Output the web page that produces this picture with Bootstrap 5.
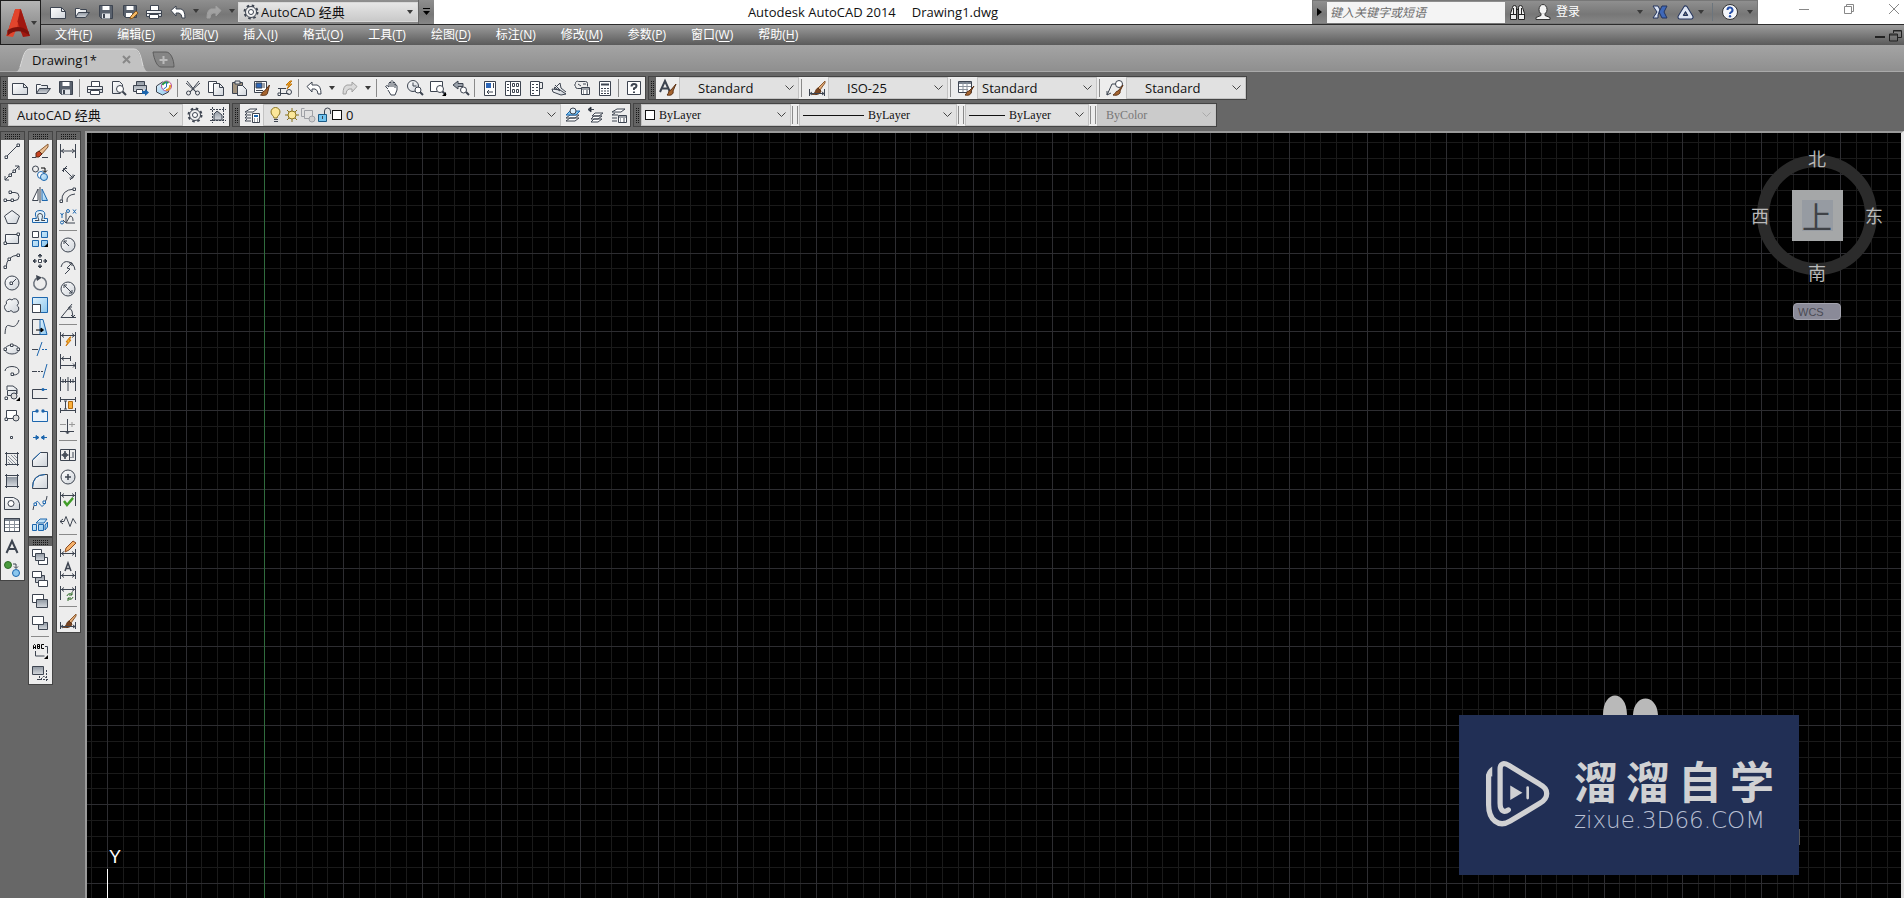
<!DOCTYPE html>
<html lang="zh-CN">
<head>
<meta charset="utf-8">
<meta name="viewport" content="width=device-width, initial-scale=1">
<title>Autodesk AutoCAD 2014 - Drawing1.dwg</title>
<link href="https://cdn.jsdelivr.net/npm/bootstrap@5.3.0/dist/css/bootstrap.min.css" rel="stylesheet">
<style>
  :root { --ink:#3d4450; --blue:#1d66ad; --strip:#ededed; --desk:#676767; }
  body { font-family:"Open Sans","Noto Sans CJK SC",sans-serif; font-size:12px; line-height:16px; color:#111; background:var(--desk); }
  button { border:0; background:none; padding:0; color:inherit; }
  svg { display:block; flex:none; }
  .ico { width:16px; height:16px; fill:none; stroke:var(--ink); stroke-width:1; overflow:visible; }
  .caret { width:0; height:0; border:3px solid transparent; border-top:4px solid #3a3a3a; border-bottom:0; }

  /* header */
  .app-btn { width:41px; border:1px solid #1d1d1d; background:linear-gradient(#b4b4b4,#777); }
  .title-row { height:24px; background:#fff; }
  .qat, .info-bar { background:linear-gradient(#8f8f8f,#777 60%,#868686); }
  .qat { width:393px; padding-left:5px; }
  .qat .tool { width:24px; height:23px; }
  .qat .drop { width:12px; height:22px; }
  .strip .drop { width:13px; height:22px; }
  .workspace-box { width:180px; height:20px; margin-top:2px; background:linear-gradient(#e6e6e6,#c9c9c9); border:1px solid #d8d8d8; }
  .workspace-box select { width:100%; font-size:13px; background:transparent; border:0; appearance:none; line-height:18px; padding:0 2px; color:#111; }
  .qat-more { width:16px; border-left:1px solid #666; }
  .win-title { font-size:13px; color:#111; }
  .info-bar { width:446px; border:1px solid #777; }
  .info-bar input { width:178px; border:0; background:#f4f4f4; font-size:12px; font-style:italic; padding:0 3px; color:#333; height:21px; }
  .info-bar input::placeholder { color:#6c6c6c; }
  .win-btns { width:146px; padding:0 4px 6px 40px; }

  .menu-row { height:21px; border-top:1px solid #2c2c2c; background:linear-gradient(#9c9c9c,#5a5a5a); padding:0 2px 0 14px; }
  .menu-row a { color:#fff; text-decoration:none; line-height:20px; margin-right:25px; }
  .menu-row u { text-underline-offset:2px; }
  .tab-row { height:27px; background:linear-gradient(#a4a4a4,#8f8f8f); border-bottom:1px solid #a9a9a9; padding-left:16px; }
  .doc-tab { width:132px; height:24px; margin-top:3px; font-size:13px; }
  .doc-tab > svg { inset:0; }
  .new-tab { width:24px; height:18px; margin:5px 0 0 4px; }

  /* toolbars */
  .strip { background:var(--strip); border:1px solid #444; height:24px; }
  .strip .tool { width:23px; height:22px; }
  .strip .rule { width:1px; height:18px; margin:0 3px 0 2px; background:#8a8a8a; }
  .grip { width:7px; align-self:stretch; border:solid #646464; border-width:3px 2px 3px 1px; background:linear-gradient(90deg,#646464 1px,transparent 1px) 0 0/2px 2px, linear-gradient(#646464 1px,#161616 1px) 0 0/2px 2px; }
  .combo { height:22px; border:1px solid #c3c3c3; background:#e1e1e1 no-repeat right 4px center/9px 6px url("data:image/svg+xml,%3Csvg xmlns='http://www.w3.org/2000/svg' viewBox='0 0 9 6'%3E%3Cpath d='M.5 .5l4 4 4-4' fill='none' stroke='%23444'/%3E%3C/svg%3E"); appearance:none; border-radius:0; font-size:13px; line-height:18px; color:#111; padding:0 18px; outline-offset:-1px; }
  .combo:disabled { background-color:#cbcbcb; color:#777; opacity:1; background-image:url("data:image/svg+xml,%3Csvg xmlns='http://www.w3.org/2000/svg' viewBox='0 0 9 6'%3E%3Cpath d='M.5 .5l4 4 4-4' fill='none' stroke='%23aaa'/%3E%3C/svg%3E"); }
  .combo-plain { background:transparent; border:0; appearance:none; padding:0; min-width:0; color:#111; line-height:18px; }
  .combo.near { padding-left:4px; }
  .serif-combo, .serif-combo select { font-family:"Liberation Serif",serif; font-size:12px; }
  .serif-combo.d-flex.combo { padding-left:3px; }
  .w-style { width:120px; }
  .rule-pair { width:6px; border:solid #8a8a8a; border-width:0 1px; height:18px; margin:0 1px; flex:none; }
  .swatch { width:10px; height:10px; border:1px solid #111; background:#fff; flex:none; }
  .lineweight { height:1px; background:#111; flex:none; }

  .side { gap:3px; }
  .strip-v { width:25px; height:auto; }
  .strip-v .tool { width:22px; height:22px; }
  .strip-v .rule { width:18px; height:1px; margin:2px 2px 3px; }
  .strip-v .grip { width:auto; height:8px; border-width:1px 3px; }

  /* drawing area */
  .model { border:solid #9a9a9a; border-width:2px 3px 0 2px; border-right-color:#e4e4e4; margin-left:4px; background:#000; min-height:300px; }
  .model > svg.sheet { inset:0; width:100%; height:100%; }
  .ucs { left:20px; bottom:0; color:#fff; font:18px/18px "Liberation Sans",sans-serif; height:50px; }
  .ucs::before { content:""; position:absolute; left:0; bottom:0; width:1px; height:29px; background:#fff; }
  .ucs span { padding-left:2px; }
  .compass { right:18px; top:15px; width:132px; height:172px; color:#b9b9b9; font-size:18px; line-height:20px; font-family:"Noto Sans CJK SC",sans-serif; }
  .compass-ring { width:120px; height:120px; margin:7px auto 0; border:12px solid #2b2b2b; border-radius:50%; }
  .compass-mark { position:absolute; }
  .mark-n { left:57px; top:0; } .mark-w { left:0; top:57px; } .mark-e { right:0; top:57px; } .mark-s { left:57px; top:114px; }
  .cube { width:51px; height:51px; background:#a5a7a8; color:#3f4247; font-size:30px; box-shadow:inset 0 0 0 10px #a5a7a8, inset 0 0 0 51px #969ba2; }
  .wcs { width:48px; height:17px; background:#8a8a98; border:1px solid #a3a3ae; border-radius:4px; color:#4a4a54; font:11px/14px "Liberation Sans",sans-serif; padding:0 4px; text-align:left; left:42px; top:155px; }
  .brand-card { right:102px; bottom:23px; width:340px; height:160px; background:#212f55; color:#d0d1d3; padding:0 26px 3px; }
  .brand-card .ears { position:absolute; left:143px; top:-20px; }
  .brand-card::after { content:""; position:absolute; left:100%; bottom:30px; width:1px; height:16px; background:#555; }
  .brand-name { font:700 44px/52px "Noto Sans CJK SC",sans-serif; gap:8px; }
  .brand-site { font:200 23px/28px "DejaVu Sans",sans-serif; color:#b9c0d4; }
</style>
</head>
<body class="d-flex flex-column min-vh-100 overflow-hidden">
<svg width="0" height="0" class="position-absolute" aria-hidden="true">
  <defs>
    <linearGradient id="paper" x2="1" y2="1"><stop stop-color="#fff"/><stop offset="1" stop-color="#cfd4da"/></linearGradient>
    <linearGradient id="steel" x2="0" y2="1"><stop stop-color="#8e96a0"/><stop offset="1" stop-color="#d5d9de"/></linearGradient>
    <linearGradient id="sky" x2="1" y2="1"><stop stop-color="#e4f3fc"/><stop offset="1" stop-color="#8cc7ee"/></linearGradient>
  </defs>
</svg>

<header>
  <div class="d-flex">
    <button class="app-btn d-flex align-items-center" aria-label="应用程序菜单">
      <svg class="ms-1" width="26" height="29" viewBox="3 2 23 26">
        <path d="M4 27L12 3h5l8 24h-6l-3-6-4 1-2 5z" fill="#c42a17"/>
        <path d="M12 3L4 27l6 1 4-9 2-16z" fill="#e2452c"/>
        <path d="M17 3l8 24-6 1-5-14z" fill="#a01810"/>
        <path d="M5 22c7-4 13-4 19 1l1 4c-5-5-14-6-20 0z" fill="#7d120c"/>
      </svg>
      <span class="caret"></span>
    </button>
    <div class="flex-grow-1">
      <div class="title-row d-flex">
        <div class="qat d-flex" data-tools="new open save saveas print undo ▾ redo ▾">
          <div class="workspace-box d-flex align-items-center order-1">
            <svg class="ico ms-1" viewBox="0 0 16 16"><use href="#i-gear"/></svg>
            <select aria-label="工作空间"><option>AutoCAD 经典</option></select>
            <span class="caret me-1"></span>
          </div>
          <button class="qat-more order-1" aria-label="自定义快速访问工具栏"><svg width="15" height="12" viewBox="0 0 15 12"><path d="M4 2h7v1H4zM4 5h7L7.500 9z"/></svg></button>
        </div>
        <div class="win-title flex-grow-1 d-flex justify-content-center align-items-center gap-3"><span>Autodesk AutoCAD 2014</span><span>Drawing1.dwg</span></div>
        <div class="info-bar d-flex align-items-center">
          <button class="d-flex justify-content-center px-1" aria-label="展开"><svg width="6" height="8" viewBox="0 0 6 8"><path d="M0 0l5 4-5 4z"/></svg></button>
          <input type="text" placeholder="键入关键字或短语" aria-label="键入关键字或短语">
          <button class="ms-1" aria-label="搜索"><svg width="17" height="18" viewBox="0 0 17 18" fill="#ededed" stroke="#222"><path d="M3.500 4.500q0-2 2-2t2 2v12h-6v-6zM9.500 4.500q0-2 2-2t2 2l2 6v6h-6z"/><path d="M2 11.500h5M10 11.500h5M7 6.500h3M4.500 5v6M12.500 5v6"/></svg></button>
          <button class="d-flex align-items-center ms-2 text-white"><svg width="18" height="18" viewBox="0 0 18 18" fill="#f3f3f3" stroke="#333"><ellipse cx="9" cy="6.500" rx="4" ry="5"/><path d="M7 11v1.500l-5 2v2h14v-2l-5-2V11"/></svg><span class="ms-1">登录</span></button>
          <span class="caret ms-auto me-2"></span>
          <button aria-label="Autodesk Exchange"><svg width="18" height="18" viewBox="0 0 18 18" stroke="#24355f"><path d="M2 3h5l2 4-2 5v3H2l4-6z" fill="#dbe3f2"/><path d="M16 3h-5L8 9l3 6h5l-3-6z" fill="#3f68b8"/></svg></button>
          <button class="ms-2" aria-label="Autodesk 360"><svg width="17" height="17" viewBox="0 0 17 17" fill="none" stroke="#24355f"><path d="M8.500 4L14 13H3z" stroke-width="5" stroke-linejoin="round"/><path d="M8.500 4L14 13H3z" stroke="#dfe6f3" stroke-width="3" stroke-linejoin="round"/><path d="M8.500 8l2 3.500h-4z" fill="#777"/></svg></button>
          <span class="caret ms-1"></span>
          <button class="mx-2 ps-2 border-start border-secondary" aria-label="帮助"><svg width="18" height="18" viewBox="0 0 18 18"><circle cx="9" cy="9" r="7.500" fill="#f4f6fa" stroke="#333"/><path d="M6.500 7a2.500 2.500 0 1 1 3.500 2.300Q9 9.800 9 11" fill="none" stroke="#2850a8" stroke-width="2"/><circle cx="9" cy="13.200" r="1.200" fill="#2850a8"/></svg></button>
          <span class="caret me-1"></span>
        </div>
        <div class="win-btns d-flex justify-content-between align-items-center">
          <button aria-label="最小化"><svg width="12" height="12" viewBox="0 0 12 12" stroke="#888"><path d="M1 6.500h10"/></svg></button>
          <button aria-label="还原"><svg width="12" height="12" viewBox="0 0 12 12" stroke="#888" fill="none"><path d="M1.500 3.500h7v7h-7zM3.500 3V1.500h7v7H9"/></svg></button>
          <button aria-label="关闭"><svg width="12" height="12" viewBox="0 0 12 12" stroke="#888"><path d="M1 1l10 10M11 1L1 11"/></svg></button>
        </div>
      </div>
      <nav class="menu-row d-flex" aria-label="主菜单">
        <a href="#">文件(<u>F</u>)</a><a href="#">编辑(<u>E</u>)</a><a href="#">视图(<u>V</u>)</a><a href="#">插入(<u>I</u>)</a><a href="#">格式(<u>O</u>)</a><a href="#">工具(<u>T</u>)</a><a href="#">绘图(<u>D</u>)</a><a href="#">标注(<u>N</u>)</a><a href="#">修改(<u>M</u>)</a><a href="#">参数(<u>P</u>)</a><a href="#">窗口(<u>W</u>)</a><a href="#">帮助(<u>H</u>)</a>
        <button class="ms-auto me-1" aria-label="最小化图形"><svg width="10" height="12" viewBox="0 0 10 12"><path d="M0 7h10v2H0z" fill="#222"/></svg></button>
        <button aria-label="还原图形"><svg width="13" height="13" viewBox="0 0 13 13" fill="none" stroke="#222"><path d="M4.500 4V1.500h8v7H9"/><path d="M.5 5h8v7h-8zM.5 6h8M4 2h8"/></svg></button>
      </nav>
    </div>
  </div>
  <div class="tab-row d-flex">
    <div class="doc-tab position-relative">
      <svg class="position-absolute" width="132" height="24" viewBox="0 0 132 24"><path d="M0 24C6 22 6 1 14 1h104c7 0 8 21 14 23z" fill="#c2c2c2"/><path d="M4 19C7 10 8 1 14 1h104c6 0 7 9 9 17" fill="none" stroke="#dadada"/></svg>
      <div class="position-relative d-flex align-items-center h-100 ps-3 pe-3"><span>Drawing1*</span>
        <button class="ms-auto" aria-label="关闭选项卡"><svg width="10" height="10" viewBox="0 0 10 10" stroke="#888" stroke-width="2"><path d="M1 1l7 7M8 1L1 8"/></svg></button></div>
    </div>
    <button class="new-tab" aria-label="新建选项卡"><svg width="24" height="17" viewBox="0 0 24 17"><path d="M1 1h13c5 0 8 8 8 15H9C5 16 2 8 1 1z" fill="#858585" stroke="#5c5c5c"/><path d="M11.500 5v8M7.500 9h8" stroke="#bbb" stroke-width="2"/></svg></button>
  </div>
</header>

<div class="d-flex flex-wrap mt-1" style="column-gap:2px">
  <div class="strip d-flex align-items-center" role="toolbar" aria-label="标准" data-tools="# new open save | print preview publish web | cut copy paste match block | undo ▾ redo ▾ | pan zoomrt zoomwin zoomprev | props center palettes sheet markup calc | help"></div>
  <div class="strip d-flex align-items-center" role="toolbar" aria-label="样式">
    <span class="grip"></span><span data-tools="textstyle" class="d-flex"></span>
    <select class="combo w-style" aria-label="文字样式"><option>Standard</option></select><span class="rule"></span>
    <span data-tools="dimstyle" class="d-flex"></span>
    <select class="combo w-style" aria-label="标注样式"><option>ISO-25</option></select><span class="rule"></span>
    <span data-tools="tablestyle" class="d-flex"></span>
    <select class="combo near w-style" aria-label="表格样式"><option>Standard</option></select><span class="rule"></span>
    <span data-tools="leaderstyle" class="d-flex"></span>
    <select class="combo w-style" aria-label="多重引线样式"><option>Standard</option></select>
  </div>
</div>
<div class="d-flex flex-wrap mb-1" style="margin-top:3px;column-gap:2px">
  <div class="strip d-flex align-items-center" role="toolbar" aria-label="工作空间">
    <span class="grip"></span>
    <select class="combo" style="width:175px;padding-left:8px" aria-label="工作空间"><option>AutoCAD 经典</option></select>
    <span data-tools="gear wsave" class="d-flex"></span>
  </div>
  <div class="strip d-flex align-items-center" role="toolbar" aria-label="图层">
    <span class="grip"></span><span data-tools="layers" class="d-flex"></span>
    <div class="combo d-flex align-items-center px-1" style="width:298px">
      <svg class="ico" viewBox="0 0 16 16"><path d="M5 11c0-2-3-3-3-6a4.500 4.500 0 0 1 9 0c0 3-3 4-3 6z" transform="translate(1 0)" fill="#fbe79a" stroke="#8a7420"/><path d="M6 12.500h4M6 14.500h4"/></svg>
      <svg class="ico" viewBox="0 0 16 16"><path d="M8 1v14M1 8h14M3 3l10 10M13 3L3 13" stroke="#8a7420"/><circle cx="8" cy="8" r="4" fill="#fbe79a" stroke="#8a7420"/></svg>
      <svg class="ico" viewBox="0 0 16 16" opacity=".4"><path d="M4.500 1.500h-3v8h3M4.500 3.500h8v8h-8z"/><circle cx="12" cy="12" r="3" fill="#bbb"/></svg>
      <svg class="ico" viewBox="0 0 16 16"><path d="M2.500 7.500h8v7h-8z" fill="#74c4ee" stroke="#1a5a85"/><path d="M8.500 7V4a3 3 0 0 1 6 0v3M6.500 9v3"/></svg>
      <span class="swatch ms-0 me-1"></span>
      <select class="combo-plain flex-grow-1" aria-label="当前图层"><option>0</option></select>
    </div>
    <span data-tools="laycur layprev laystate" class="d-flex"></span>
  </div>
  <div class="strip d-flex align-items-center serif-combo" role="toolbar" aria-label="特性">
    <span class="grip"></span>
    <div class="combo d-flex align-items-center gap-1 serif-combo" style="width:150px"><span class="swatch"></span><select class="combo-plain flex-grow-1" aria-label="颜色"><option>ByLayer</option></select></div>
    <span class="rule-pair"></span>
    <div class="combo d-flex align-items-center gap-1 serif-combo" style="width:158px"><span class="lineweight" style="width:61px"></span><select class="combo-plain flex-grow-1" aria-label="线型"><option>ByLayer</option></select></div>
    <span class="rule-pair"></span>
    <div class="combo d-flex align-items-center gap-1 serif-combo" style="width:124px"><span class="lineweight" style="width:36px"></span><select class="combo-plain flex-grow-1" aria-label="线宽"><option>ByLayer</option></select></div>
    <span class="rule-pair"></span>
    <select class="combo serif-combo" style="width:119px;padding-left:8px" disabled aria-label="打印样式"><option>ByColor</option></select>
  </div>
</div>

<main class="d-flex flex-grow-1">
  <div class="side d-flex align-items-start">
    <div class="strip strip-v d-flex flex-column" role="toolbar" aria-label="绘图" data-tools="# line xline pline polygon rect arc circle cloud spline ellipse earc insert mkblock point hatch gradient region table text addsel"></div>
    <div>
      <div class="strip strip-v d-flex flex-column" role="toolbar" aria-label="修改" data-tools="# erase copyobj mirror offset array move rotate scale stretch trim extend breakpt break join chamfer fillet blend explode"></div>
      <div class="strip strip-v d-flex flex-column" role="toolbar" aria-label="绘图次序" data-tools="# front back above under | textfront hatchback"></div>
    </div>
    <div class="strip strip-v d-flex flex-column" role="toolbar" aria-label="标注" data-tools="# dlinear daligned darc dord | dradius djog ddia dangle | dquick dbase dcont dspace dbreak | tol dcenter dinspect djogline | dedit dtedit dupdate | dimstyle"></div>
  </div>

  <section class="model flex-grow-1 position-relative overflow-hidden" aria-label="模型空间">
    <svg class="sheet position-absolute" aria-hidden="true"><path class="minor" stroke="#1a1a1a"/><path class="major" stroke="#2d2d31"/><path class="axis" stroke="#2f6b3d"/></svg>
    <div class="ucs position-absolute"><span>Y</span></div>
    <div class="compass position-absolute">
      <div class="compass-ring d-flex align-items-center justify-content-center"><div class="cube d-flex align-items-center justify-content-center">上</div></div>
      <span class="compass-mark mark-n">北</span><span class="compass-mark mark-w">西</span><span class="compass-mark mark-e">东</span><span class="compass-mark mark-s">南</span>
      <button class="wcs position-absolute">WCS</button>
    </div>
    <div class="brand-card position-absolute d-flex align-items-center">
      <svg class="ears" width="56" height="20" viewBox="0 0 56 20" fill="#b9b9b9"><path d="M1 20C1-6 25-6 25 20zM31 20c1-22 24-22 25 0z"/></svg>
      <svg width="65" height="67" viewBox="132 242 198 204" fill="none" stroke="#d0d1d3" stroke-width="16" stroke-linecap="round" stroke-linejoin="round"><path d="M143 290v88c0 45 30 72 66 50l90-54c28-17 28-44 0-58l-95-58c-16-9-26-5-26 12v104c0 26 14 28 25 20"/><path d="M135 290q2-16 19-28v30z" fill="#d0d1d3" stroke="none"/><path d="M209 320l37 22-37 22z" fill="#d0d1d3" stroke="none"/><path d="M262 326v32" stroke-width="8"/></svg>
      <div class="ms-4">
        <div class="brand-name d-flex"><span>溜</span><span>溜</span><span>自</span><span>学</span></div>
        <div class="brand-site">zixue.3D66.COM</div>
      </div>
    </div>
  </section>
</main>

<script src="https://cdn.jsdelivr.net/npm/bootstrap@5.3.0/dist/js/bootstrap.bundle.min.js"></script>
<script>
// Shared fragments
const lens = '<circle cx="10" cy="9" r="3.500" fill="#fff"/><path d="M12.500 11.500L16 15" stroke-width="2"/>';
const brush = '<path d="M16 1L9 8l2 2 5-7z" fill="#e0aa78" stroke="#8a5a30"/><path d="M3 14c4 0 3-5 6-6l3 3c-1 4-6 4-9 3z" fill="#7a4520" stroke="#5d3316"/>';
const dim = '<path d="M.5 1v14M15.500 1v14M1 8h14M4 6L1.500 8 4 10M12 6l2.500 2-2.500 2"/>';
const lowDim = '<path d="M.5 8v8M15.500 8v8M1 12.500h14M4 10.500l-2.500 2 2.500 2M12 10.500l2.500 2-2.500 2"/>';
const topDim = '<path d="M.5 1v14M15.500 1v14M1 4.500h14M4 2.500l-2.500 2 2.500 2M12 2.500l2.500 2-2.500 2"/>';
const node = (x, y, c = '#3d4450') => `<path d="M${x - 1} ${y - 1}h2.500v2.500h-2.500z" fill="#fff" stroke="${c}"/>`;
const corner = '<path d="M16 12v4h-4z" fill="#000" stroke="none"/>';

// name: [label, drawing on a 16 x 16 field]
const icons = {
  new:['新建','<path d="M.5 3.500h11l4 4v7H.5z" fill="url(#paper)"/><path d="M11.500 3.500v4h4"/>'],
  open:['打开','<path d="M1.500 13.500v-9h4l1 1h6v3" fill="url(#paper)"/><path d="M1.500 13.500l3-5h11l-4 5z" fill="url(#steel)"/>'],
  save:['保存','<path d="M1.500 1.500h13v13h-11l-2-2z" fill="#59616d"/><path d="M4.500 2h7v4h-7z" fill="#fff" stroke="none"/><path d="M4 9.500h8v5H4z" fill="#e5e8ec" stroke="none"/><path d="M6 10v4" stroke-width="2"/>'],
  saveas:['另存为','<path d="M1.500 1.500h13v12h-11l-2-2z" fill="#59616d"/><path d="M4.500 2h7v4h-7zM4 9h6v4H4z" fill="#fff" stroke="none"/><path d="M8 15l1-3 5-5 2 2-5 5z" fill="#f2b866" stroke="#8a5a20"/>'],
  print:['打印','<path d="M4.500 6V1.500h8V6" fill="#fff"/><path d="M.5 6.500h15v6H.5z" fill="url(#paper)"/><path d="M1 9.500h14"/><path d="M3.500 10.500h9v4h-9z" fill="#fff"/>'],
  preview:['打印预览','<path d="M10.500 13.500h-8v-12h7l3 3v3" fill="url(#paper)"/>'+lens],
  publish:['发布','<path d="M3.500 5V1.500h8V5M.5 5.500h13v6H.5z" fill="url(#steel)"/><path d="M3.500 9.500h6v4h-6z" fill="#fff"/><path d="M9 11h3V9l4 3.500-4 3.500v-2H9z" fill="#1d66ad" stroke="none"/>'],
  web:['三维打印','<path d="M.5 6l6-4 6 3v7l-6 3-6-3z" fill="url(#sky)"/><circle cx="10.500" cy="6" r="5" fill="#fff" stroke="#b84a9a"/><path d="M6.500 5a4 4 0 0 1 6-2" stroke="#2b9a4a" stroke-width="2"/><path d="M14 5a4 4 0 0 1-4 5" stroke="#e9a12a" stroke-width="2"/><path d="M10.500 2v5l-3 2" stroke="#2b6fc0"/>'],
  cut:['剪切','<path d="M2 1l9 11M14 1L5 12M1 3l10 9M15 3L5 12"/><circle cx="3.500" cy="13" r="2"/><circle cx="12.500" cy="13" r="2"/>'],
  copy:['复制','<path d="M.5 1.500h8v11h-8z" fill="#fff"/><path d="M5.500 3.500h6l4 4v8h-10z" fill="url(#paper)"/><path d="M11.500 3.500v4h4"/>'],
  paste:['粘贴','<path d="M1.500 2.500h10v11h-10z" fill="#a1937f"/><path d="M4 1h5v3H4z" fill="#ddd"/><path d="M6.500 5.500h5l4 4v6h-9z" fill="url(#paper)"/>'],
  match:['特性匹配','<path d="M.5 1.500h12v11H.5z" fill="#fff"/><path d="M2 3h6v5H2z" fill="#2d66b8"/><path d="M10 3v5M2 10.500h7"/><path d="M15.500 5l-5 6c-3 0-2 4-4 4 4 1 7 0 7-2z" fill="#a5642f" stroke="#5d3316"/>'],
  block:['块编辑器','<path d="M1 8.500h8M3.500 8.500v5h8"/><circle cx="12" cy="12" r="2.500"/>'+node(2,14)+'<path d="M13 1l-4 4h3l-2 4 5-5h-3l3-3z" fill="#f5a524" stroke="#c07810"/>'],
  undo:['放弃','<path d="M1 6.500L6 2v3h5q4 1 4 9h-3q0-4-3-5H6v3z" fill="#fff"/>'],
  redo:['重做','<path d="M15 6.500L10 2v3H5q-4 1-4 9h3q0-4 3-5h3v3z" fill="#c8c8c8" fill-opacity=".5" stroke="#a0a0a0"/>'],
  pan:['实时平移','<path d="M4 9L1.500 6.500l1.500-1L5 7V3l1-1 1 1V1.500L8 .5l1 1V3l1-1 1 1v2l1-.5 1 1.500v4l-2 5H7L4 10" fill="#fff"/><path d="M7 3v4M9 3v4M11 4v4"/>'],
  zoomrt:['实时缩放','<circle cx="6" cy="6" r="5.500" fill="url(#paper)"/><path d="M6 2.500V6h3.500"/><circle cx="11" cy="10" r="3" fill="#fff"/><path d="M13 12l3 3" stroke-width="2"/>'],
  zoomwin:['窗口缩放','<path d="M12.500 7V1.500H.5v10H7" fill="#fff"/>'+lens+corner],
  zoomprev:['缩放上一个','<path d="M0 5l5-4v2.500h5v3H5V9z" fill="#9aa1aa"/><circle cx="10.500" cy="10" r="3" fill="#fff"/><path d="M13 12l3 3" stroke-width="2"/>'],
  props:['特性','<path d="M2.500 1.500h11v14h-11z" fill="#fff"/><path d="M4 3h5v5H4z" fill="#2d66b8" stroke="none"/><path d="M11.500 3v5M5 12h6M7 10l-2 2 2 2"/>'],
  center:['设计中心','<path d="M.5 1.500h15v14H.5z" fill="#fff"/><path d="M5.500 1v14M2 4.500h2M2 7.500h2M2 10.500h2M7.500 3.500h2v3h-2zM11.500 3.500h2v3h-2zM7.500 9.500h2v3h-2zM11.500 9.500h2v3h-2z"/>'],
  palettes:['工具选项板','<path d="M2.500 1.500h9v14h-9z" fill="#fff"/><path d="M11.500 2.500h3v6h-3zM4 4.500h2M8 4.500h2M4 7.500h2M8 7.500h2M4 10.500h2M8 10.500h2M4 13.500h2"/>'],
  sheet:['图纸集','<path d="M1 9l8 1 6 4-5 1-8-3zM3 9l6-6 1 5 5 4" fill="url(#paper)"/><path d="M3 7l6 4M4 5l5 5"/>'],
  markup:['标记集','<path d="M8 8.500H3.500a2 2 0 0 1-2-2 2 2 0 0 1 0-3 2 2 0 0 1 3-2h7a2 2 0 0 1 2 2v3"/><path d="M7.500 7.500h8v7h-8z" fill="#fff"/><path d="M8 9h7M9 11h1M12 11h2M9 13h1M12 13h2M4 4l3 2M9 4h3"/>'],
  calc:['快速计算器','<path d="M2.500 1.500h11v14h-11z" fill="#fff"/><path d="M4 4.500h8" stroke-width="2"/><path d="M4 8.500h2M7 8.500h2M10 8.500h2M4 11h2M7 11h2M10 11h2M4 13.500h2M7 13.500h2M10 13.500h2"/>'],
  help:['帮助','<path d="M1.500 1.500h13v13h-13z" fill="#fff"/><path d="M5.500 6.500q0-2.500 2.500-2.500t2.500 2q0 1.500-2.500 2.500v1.500M8 11.500v1.500" stroke-width="2"/>'],
  textstyle:['文字样式','<path d="M0 12L5 1l5 11M2 8.500h6" stroke-width="2"/><path d="M16 4l-5 6c-3 0-2 4-4 5 4 1 7-1 6-4z" fill="#a5642f" stroke="#5d3316"/>'],
  dimstyle:['标注样式',brush+'<path d="M.5 9v7M15.500 9v7M1 13.500h14M3 12l-2 1.500L3 15M13 12l2 1.500-2 1.500"/>'],
  tablestyle:['表格样式','<path d="M.5 1.500h13v11H.5z" fill="#fff"/><path d="M1 3h12" stroke="#7b8490" stroke-width="2"/><path d="M1 6.500h12M1 9.500h9M5 2v10M9 2v10" stroke="#8b929c"/><path d="M16 6l-5 5c-3 0-2 3-4 4 4 1 7-1 6-4z" fill="#a5642f" stroke="#5d3316"/>'],
  leaderstyle:['多重引线样式','<path d="M0 15L5 4h4M0 15v-4M0 15l4-2"/><circle cx="12" cy="4" r="3.500" fill="#fff"/><path d="M16 5l-5 6c-3 0-2 3-5 4 4 1 8-1 7-4z" fill="#a5642f" stroke="#5d3316"/>'],
  gear:['工作空间设置','<g id="i-gear"><circle cx="8" cy="8" r="6.500" fill="none" stroke-width="2" stroke-dasharray="2.500 2.600"/><circle cx="8" cy="8" r="5.500" fill="#eee"/><circle cx="8" cy="8" r="2.500" fill="#fff"/></g>'],
  wsave:['我的工作空间','<path d="M2.500 0v16M13.500 0v16M0 2.500h16M0 13.500h16" stroke-dasharray="2 1"/><path d="M4 13V7l3-3 5 4v5z" fill="url(#steel)"/>'],
  layers:['图层特性管理器','<path d="M1 5l5-3h7l-4 3zM1 8h6M1 8l2-2M1 11h6M1 14h6M1 11l2-2M1 14l2-2" fill="#fff"/><path d="M8.500 6.500h7v9h-7z" fill="#fff"/><path d="M10 9h4" stroke="#1d66ad" stroke-width="2"/><path d="M10 12h1M13 12h1M10 14h1M13 14h1"/>'],
  laycur:['置为当前','<path d="M1 14l4-3h9l-4 3zM1 11l4-3h9l-4 3z" fill="#fff"/><path d="M1 8l4-4h10l-4 4z" fill="#7cc3ef" stroke="#1d66ad"/><circle cx="8" cy="4" r="3" fill="#dff0fb"/>'],
  layprev:['上一个图层','<path d="M3 15l3-3h8l-4 3zM3 12l3-3h8l-4 3zM4 9l3-3h8l-4 3z" fill="#fff"/><path d="M6 2.500H1M3 0L0 2.500 3 5z" fill="#000"/>'],
  laystate:['图层状态','<path d="M1 5l5-3h8l-4 3zM1 8l3-2M1 8h6M1 11h5M1 14h5" fill="#fff"/><path d="M7.500 8.500h8v7h-8z" fill="#fff"/><path d="M8 10h7M9 12h1M12 12h2M9 14h1M12 14h2"/>'],
  line:['直线','<path d="M2 14L14 2"/>'+node(2,14)+node(14,2)],
  xline:['构造线','<path d="M1 15L15 1M1 11v4h4M11 1h4v4"/>'+node(6,10)+node(10,6)],
  pline:['多段线','<path d="M2 13.500h7M6 5.500h5a4 4 0 0 1 0 8H9"/>'+node(1,13)+node(8,13)+node(6,5)],
  polygon:['正多边形','<path d="M8 1.500L15.500 7l-3 7.500h-9L.5 7z" fill="url(#paper)"/>'],
  rect:['矩形','<path d="M1.500 3.500h13v9h-13z" fill="url(#paper)"/>'+node(1,12)+node(14,3)],
  arc:['圆弧','<path d="M2 14Q3 3 14 2"/>'+node(1,14)+node(5,6)+node(14,2)],
  circle:['圆','<circle cx="8" cy="8" r="7" fill="url(#paper)"/><path d="M8 8l4-4"/>'+node(7,8)],
  cloud:['修订云线','<path d="M8 3a3.500 3.500 0 0 1 6 1 3.500 3.500 0 0 1-1 4.500A3.500 3.500 0 0 1 12 15a4 4 0 0 1-5-1.500A3.500 3.500 0 0 1 1 12a3.500 3.500 0 0 1 1.500-5A3.500 3.500 0 0 1 8 3z" fill="url(#paper)"/>'],
  spline:['样条曲线','<path d="M1 15C2-4 9 17 15 1"/>'],
  ellipse:['椭圆','<ellipse cx="8" cy="8.500" rx="7" ry="4.500" fill="url(#paper)"/>'+node(1,8)+node(14,8)+node(7.5,4)],
  earc:['椭圆弧','<path d="M1 8c0-6 14-6 14 0q0 4-6 4"/>'+node(8,11)],
  insert:['插入块','<path d="M3 5V1h6l4 3v5M3.500 5.500h9v5h-9z" fill="url(#paper)"/><circle cx="10" cy="11" r="3" fill="#ddd"/>'+node(2,13)+corner],
  mkblock:['创建块','<path d="M2.500 3.500h10v8h-10z" fill="#fff"/><circle cx="12" cy="11" r="3" fill="#ddd"/>'+node(2,12)],
  point:['点','<path d="M6.500 7.500h2v2h-2z" fill="#fff"/>'],
  hatch:['图案填充','<path d="M2.500 1v14M13.500 1v14M1 2.500h14M1 13.500h14"/><path d="M4 5l8 8M4 8l5 5M7 4l6 6M10 4l3 3M4 11l2 2" stroke="#8b929c"/>'],
  gradient:['渐变色','<path d="M3 4h10v9H3z" fill="url(#steel)" stroke="none"/><path d="M2.500 1v14M13.500 1v14M1 2.500h14M1 13.500h14"/>'],
  region:['面域','<path d="M.5 2.500h9q6 2 6 6v6H.5z" fill="url(#paper)"/><circle cx="7" cy="8.500" r="3" fill="#fff"/>'],
  table:['表格','<path d="M.5 1.500h15v13H.5z" fill="#fff"/><path d="M1 3h14" stroke-width="2" stroke="#7b8490"/><path d="M1 7.500h14M1 10.500h14M5.500 4v10M10.500 4v10" stroke="#8b929c"/><path d="M.5 1.500h15v13H.5z"/>'],
  text:['多行文字','<path d="M2.500 14L8 2l5.500 12M4.500 10h7" stroke-width="2"/>'],
  addsel:['添加选定对象','<circle cx="4" cy="4" r="3.500" fill="#4b9b3e" stroke="#2f6b28"/><circle cx="12" cy="12" r="3.500" fill="#8cc7ee" stroke="#1d66ad"/><path d="M9 3h3v4M10 5.500l2 2 2-2"/>'],
  erase:['删除','<path d="M16 1L6 9l3 3 7-8z" fill="#e9bd91" stroke="#8a5a30"/><path d="M4 10l3-2 3 3-3 3H4z" fill="#c8401f" stroke="#5d2a16"/><path d="M0 14.500h4M10 14.500h6"/>'],
  copyobj:['复制','<circle cx="3.500" cy="4" r="3"/><path d="M9 3h4v4M11 5.500l2 2 2-2" stroke="#000"/><circle cx="9" cy="10" r="3.500" fill="#fff" stroke="#1d66ad"/><circle cx="12" cy="12" r="3.500" fill="url(#sky)" stroke="#1d66ad"/>'],
  mirror:['镜像','<path d="M6 2v11.500H.5z" fill="#fff"/><path d="M10 2v11.500h5.500z" fill="url(#sky)" stroke="#1d66ad"/><path d="M8 0v16"/>'],
  offset:['偏移','<path d="M.5 13.500v-4h4Q1 1.500 8 1.500t4 8h3.500v4z" fill="#e4f3fc" stroke="#1d66ad"/><path d="M3 11.500h4Q4 4.500 8 4.500t1.500 7H13"/>'],
  array:['阵列','<path d="M.5 .5h6v6h-6z" fill="#fff"/><path d="M9.500 .5h6v6h-6zM.5 9.500h6v6h-6zM9.500 9.500h6v6h-6z" fill="url(#sky)" stroke="#1d66ad"/>'+corner],
  move:['移动','<path d="M8 1v4M8 11v4M1 8h4M11 8h4M6 3l2-2 2 2zM6 13l2 2 2-2zM3 6L1 8l2 2zM13 6l2 2-2 2z" fill="#3d4450"/><path d="M6.500 6.500h3v3h-3z" fill="#fff"/>'],
  rotate:['旋转','<path d="M10 2.500A6.300 6.300 0 1 1 5 3" stroke="#6b727c" stroke-width="1.500"/><path d="M4 0l6 2.500L5 6z" fill="#3d4450" stroke="none"/>'],
  scale:['缩放','<path d="M.5 .5h15v15H.5z" fill="url(#sky)" stroke="#1d66ad"/><path d="M.5 7.500h8v8h-8z" fill="#fff"/>'],
  stretch:['拉伸','<path d="M8 .5h3l4 15H8z" fill="url(#sky)" stroke="#1d66ad"/><path d="M8 .5H.5v15H8"/><path d="M4 11h7M9 9l2.500 2L9 13z" fill="#000" stroke="#000"/>'],
  trim:['修剪','<path d="M10 1L5 15" stroke="#1d66ad"/><path d="M0 8.500h6"/><path d="M10 8.500h6" stroke="#1d66ad" stroke-dasharray="2 1"/>'],
  extend:['延伸','<path d="M15 1l-4 14" stroke="#1d66ad"/><path d="M0 8.500h5M6 8.500h2M9 8.500h2"/>'],
  breakpt:['打断于点','<path d="M.5 14V4.500h14M.5 13.500h15"/><path d="M10 4.500h5" stroke="#1d66ad"/><circle cx="11" cy="4.500" r="1.500" fill="#1d66ad" stroke="none"/>'],
  break:['打断','<path d="M5 4.500H.5v10h15v-10H11" fill="#eaf3fa" stroke="#1d66ad"/><circle cx="5" cy="4" r="1.700" fill="#1d66ad" stroke="none"/><circle cx="11" cy="4" r="1.700" fill="#1d66ad" stroke="none"/>'],
  join:['合并','<path d="M1 8.500h5M10 8.500h5M4 6.500l3 2-3 2zM12 6.500l-3 2 3 2z" fill="#1d66ad" stroke="#1d66ad"/>'],
  chamfer:['倒角','<path d="M.5 15.500V9l8-7.500h7v14z" fill="url(#paper)"/><path d="M.5 9l8-7.500" stroke="#1d66ad"/>'],
  fillet:['圆角','<path d="M.5 15.500Q0 1.500 13 1.500h2.500v14z" fill="url(#paper)"/><path d="M.5 14Q1 2 13 1.500" stroke="#1d66ad"/>'],
  blend:['光顺曲线','<path d="M1 15q0-4 3-7M13 7q2-3 2-6"/><path d="M3 9c4-9 5 9 10-1" stroke="#1d66ad"/>'+node(3,9,'#1d66ad')+node(12,7,'#1d66ad')],
  explode:['分解','<path d="M4 6l4-4h7l-3 4zM.5 7.500h4v6h-4zM6.500 7.500h5v6h-5zM13 8l2.500-3v5L13 13z" fill="url(#sky)" stroke="#1d66ad"/>'],
  front:['前置','<path d="M.5 .5h9v7h-9zM6.500 8.500h9v7h-9z" fill="#fff"/><path d="M3.500 4.500h9v7h-9z" fill="url(#steel)"/>'],
  back:['后置','<path d="M3.500 4.500h9v7h-9z" fill="url(#steel)"/><path d="M.5 .5h9v6h-9zM6.500 9.500h9v6h-9z" fill="#fff"/>'],
  above:['置于对象之上','<path d="M.5 1.500h11v8H.5z" fill="#fff"/><path d="M4.500 6.500h11v8h-11z" fill="url(#steel)"/>'],
  under:['置于对象之下','<path d="M6.500 7.500h9v7h-9z" fill="url(#steel)"/><path d="M.5 1.500h11v8H.5z" fill="#fff"/>'],
  textfront:['将文字前置','<path d="M1.500 6V2.500l1-1 1 1V6M1.500 4.500h2M5.500 5.500v-4h2v4zM5.500 3.500h2M12 1.500H9.500v4H12" stroke="#000"/><path d="M3.500 8v5h9M13 3.500h2.500v7"/>'+corner],
  hatchback:['将图案填充后置','<path d="M.5 1.500h11v8H.5z" fill="url(#steel)"/><path d="M7.500 11v4M14.500 5v11M5 14.500h11M9 14l3-3 2 2" stroke-dasharray="2 1"/>'],
  dlinear:['线性标注',dim],
  daligned:['对齐标注','<path d="M2 6l5-5M10 15l5-5M4 4l8.500 8.500M3.500 7V3.500H7M9.500 13h3.500V9.500"/>'],
  darc:['弧长标注','<path d="M2 14Q1 3 14 2M7 15Q6 8 15 7"/>'+node(1,14)+node(14,2)],
  dord:['坐标标注','<path d="M6 3v11h9M6 14l4-7q3 0 3 5M6 14l-3-3"/><path d="M.5 4l1.500 2L3.500 4M2 6v3M13 .5l3 4M16 .5l-3 4" stroke="#1d66ad"/><circle cx="8" cy="2" r="1.500" stroke="#1d66ad"/><circle cx="2" cy="13.500" r="1.500" stroke="#1d66ad"/>'],
  dradius:['半径标注','<circle cx="8" cy="8" r="7" fill="url(#paper)"/><path d="M9 9L4 4M4 7V4h3"/>'],
  djog:['折弯标注','<path d="M1 8Q3 1 9 3q5 1 6 8M5 15l5-5-3-1 5-5M9 4h3v3"/>'],
  ddia:['直径标注','<circle cx="8" cy="8" r="7" fill="url(#paper)"/><path d="M4 4l8 8M4 7V4h3M12 9v3H9"/>'],
  dangle:['角度标注','<path d="M12 1L1 14.500h15M9 4q4 3 4 10M9 7V4h3M11 12l2 2 2-2"/>'],
  dquick:['快速标注',topDim+'<path d="M10 6l-4 5h2l-2 4 5-6H9l2-3z" fill="#f9b52c" stroke="#d07a10"/>'],
  dbase:['基线标注','<path d="M.5 1v15M10.500 3v5M1 5.500h9M4 3.500l-2.500 2 2.500 2M15.500 9v7M1 12.500h14M13 10.500l2 2-2 2"/>'],
  dcont:['连续标注','<path d="M.5 2v14M8 2v14M15.500 2v14M0 6.500h16M3 4v4M5.500 4v4M10.500 4v4M13 4v4"/>'],
  dspace:['等距标注','<path d="M.5 0v5M15.500 0v5M1 2.500h14M.5 11v5M15.500 11v5M1 13.500h14M5.500 4v8M4 4h3M4 12h3"/><path d="M8.500 4.500h4v7h-4z" fill="#fbb03b" stroke="#b06a10"/>'],
  dbreak:['折断标注','<path d="M7.500 0v14M5 12l2.500 3 2.500-3M0 12.500h14"/><path d="M0 5.500h6M9 5.500h6M12 3v5" stroke="#999"/>'],
  tol:['公差','<path d="M.5 2.500h15v11H.5zM9.500 3v10M13 5v6M11 10v1"/><circle cx="5" cy="8" r="2"/><path d="M5 4v8M1.500 8h7" stroke-width="1.500"/>'],
  dcenter:['圆心标记','<circle cx="8" cy="8" r="7" fill="url(#paper)"/><path d="M8 5v6M5 8h6" stroke-width="1.500"/>'],
  dinspect:['检验',topDim+'<path d="M4 10l3 4 6-7" stroke="#3f9c27" stroke-width="2.500"/>'],
  djogline:['折弯线性','<path d="M0 8.500h4l2-5 4 10 3-8 3 5M3 6L0 8.500 3 11"/>'],
  dedit:['编辑标注',lowDim+'<path d="M5 11l1-4 7-7 3 2-7 7z" fill="#f6b26b" stroke="#8a4a20"/>'],
  dtedit:['编辑标注文字',lowDim+'<path d="M5 8l3-8 3 8M6 5.500h4" stroke-width="1.500"/>'],
  dupdate:['标注更新',topDim+'<path d="M7 11a3 3 0 0 1 5-1.500M13 12a3 3 0 0 1-5 1.500M12 7v3H9M8 16v-3h3" stroke="#2e6b28"/>'],
};

// Each toolbar names its tools: "#" is the grip, "|" a separator, "▾" a history drop-down
for (const bar of document.querySelectorAll('[data-tools]')) {
  bar.insertAdjacentHTML('beforeend', bar.dataset.tools.split(' ').map(t => {
    if (t === '#') return '<span class="grip"></span>';
    if (t === '|') return '<span class="rule"></span>';
    if (t === '▾') return '<button class="drop d-flex align-items-center justify-content-center" aria-label="历史记录"><span class="caret"></span></button>';
    const [label, art] = icons[t];
    return `<button class="tool d-flex align-items-center justify-content-center" aria-label="${label}"><svg class="ico" viewBox="0 0 16 16">${art}</svg></button>`;
  }).join(''));
}

// Model-space grid: a major line every fifth line, green Y axis
function drawGrid() {
  const sheet = document.querySelector('.sheet');
  const { width, height } = sheet.getBoundingClientRect();
  const pitch = 15.755, left = 20.4, up = height - 14.7;
  const d = { minor: '', major: '', axis: '' };
  for (let i = -1; left + i * pitch < width; i++) {
    const x = Math.floor(left + i * pitch) + .5;
    d[i === 10 ? 'axis' : i % 5 ? 'minor' : 'major'] += `M${x} 0V${height}`;
  }
  for (let j = 0; up - j * pitch > 0; j++) {
    const y = Math.floor(up - j * pitch) + .5;
    d[j % 5 ? 'minor' : 'major'] += `M0 ${y}H${width}`;
  }
  for (const k in d) sheet.querySelector('.' + k).setAttribute('d', d[k]);
}
drawGrid();
addEventListener('resize', drawGrid);
</script>
</body>
</html>
